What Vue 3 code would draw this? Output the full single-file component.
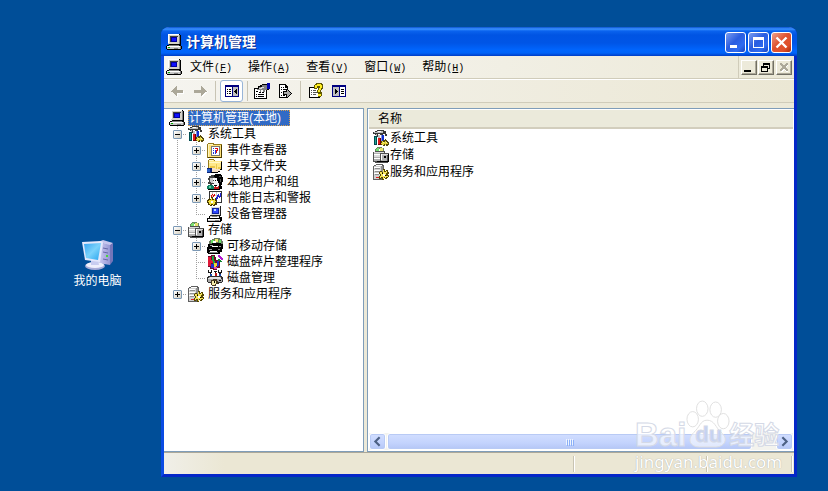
<script setup>
import { ref } from 'vue'

const menus = [
  { text: '文件', key: 'F' },
  { text: '操作', key: 'A' },
  { text: '查看', key: 'V' },
  { text: '窗口', key: 'W' },
  { text: '帮助', key: 'H' },
]

// guides: v = line passing through, t = branch, l = last branch
const tree = [
  { label: '计算机管理(本地)', icon: 'computer', guides: [] },
  { label: '系统工具', icon: 'tools', guides: ['t'], box: '-' },
  { label: '事件查看器', icon: 'events', guides: ['v', 't'], box: '+' },
  { label: '共享文件夹', icon: 'shared', guides: ['v', 't'], box: '+' },
  { label: '本地用户和组', icon: 'users', guides: ['v', 't'], box: '+' },
  { label: '性能日志和警报', icon: 'perf', guides: ['v', 't'], box: '+' },
  { label: '设备管理器', icon: 'device', guides: ['v', 'l'] },
  { label: '存储', icon: 'storage', guides: ['t'], box: '-' },
  { label: '可移动存储', icon: 'removable', guides: ['v', 't'], box: '+' },
  { label: '磁盘碎片整理程序', icon: 'defrag', guides: ['v', 't'] },
  { label: '磁盘管理', icon: 'disk', guides: ['v', 'l'] },
  { label: '服务和应用程序', icon: 'services', guides: ['l'], box: '+' },
]

const items = [
  { label: '系统工具', icon: 'tools' },
  { label: '存储', icon: 'storage' },
  { label: '服务和应用程序', icon: 'services' },
]

const selected = ref(0)
</script>

<template>
  <main class="desktop">
    <svg class="defs" aria-hidden="true">
      <symbol id="computer" viewBox="0 0 16 16">
        <path fill="#000" d="M2 0h12v1h1v10H3v-1H2zM1 11h14v1h1v3h-1v1H1v-1H0v-3h1z" />
        <path fill="#d6d2c8" d="M2 0h11v10H2z" />
        <path fill="#808080" d="M13 1h1v9h-1z" />
        <path fill="#fff" d="M2 0h11v1H3v8H2z" />
        <path fill="#404040" d="M4 2h8v1H5v5H4z" />
        <path fill="#0000a0" d="M5 3h6v5H5z" />
        <path fill="#1010ff" d="M6 4h4v3H6z" />
        <path fill="#c8c8c8" d="M1 12h13v3H1z" />
        <path fill="#fff" d="M1 12h13v1H1z" />
        <path fill="#808080" d="M14 12h1v3h-1zM8 14h4v1H8zM3 11h10v1H3z" />
        <path fill="#00b000" d="M2 13h2v1H2z" />
      </symbol>
      <symbol id="tools" viewBox="0 0 16 16">
        <path fill="#383838" d="M0 2h2V1h2V0h7v1h2v3h1v2h-2V4h-2v1H7V4H5v3H3V5H2V4H0z" />
        <path fill="#c0c0c0" d="M1 2h3v1H1zM4 1h6v2H4zM5 5h2v3H5zM3 4h1v3H3z" />
        <path fill="#fff" d="M5 1h3v1H5z" />
        <path fill="#004a50" d="M1 6h3v9H1z" />
        <path fill="#20a890" d="M2 7h1v7H2z" />
        <path fill="#e01818" d="M5 8h2v6H5z" />
        <path fill="#700000" d="M7 8h1v7H5v-1h2z" />
        <path fill="#1030d0" d="M9 5h2v6H9z" />
        <path fill="#8090e0" d="M8 5h1v6H8z" />
        <path fill="#54480a" d="M8 11h2v-1h2V9h1v1h1v1h1v1h1v3h-1v1h-2v-1h-1v1h-2v-1H8z" />
        <path fill="#e6d63c" d="M9 11h1v1h2v-1h1v2h2v1h-2v1h-1v-1h-1v1H9v-1H8v-1h1z" />
        <path fill="#fff7a0" d="M10 12h1v1h-1zM13 12h1v1h-1z" />
      </symbol>
      <symbol id="events" viewBox="0 0 16 16">
        <path fill="#967b1c" d="M0 2h1V1h6v1h8v14H0z" />
        <path fill="#ffe27a" d="M1 2h5v1h8v12H1z" />
        <path fill="#fff6c0" d="M1 2h5v1H2v12H1z" />
        <path fill="#4c3c00" d="M14 3h1v13H1v-1h13z" />
        <path fill="#777" d="M4 4h9v10H4z" />
        <path fill="#fff" d="M5 5h7v8H5z" />
        <path fill="#2038d8" d="M6 6h1v1H6zM6 8h1v1H6zM6 10h1v2H6zM8 8h1v4H8z" />
        <path fill="#e01010" d="M8 6h3v3h-1v2H9V8h1V7H8z" />
      </symbol>
      <symbol id="shared" viewBox="0 0 16 16">
        <path fill="#967b1c" d="M1 2h1V1h5v1h1v1h7v9H1z" />
        <path fill="#ffe98a" d="M2 2h5v1h7v8H2z" />
        <path fill="#fff9c8" d="M2 2h4v1H2zM2 4h12v1H2z" />
        <path fill="#ecc84c" d="M9 6h1v5H9zM11 9h3v2h-3zM3 8h5v2H3z" />
        <path fill="#000" d="M14 4h1v8H7v-1h7z" />
        <path fill="#0a2378" d="M0 10h5v5H0z" />
        <path fill="#2a62c8" d="M0 11h3v3H0z" />
        <path fill="#f5e0c8" d="M5 10h3v1h5v2h-2v1H5z" />
        <path fill="#000" d="M4 14h7v1H4zM11 13h2v1h-2z" />
      </symbol>
      <symbol id="users" viewBox="0 0 16 16">
        <path fill="#404040" d="M2 2h2V1h4v3H6v2h1v4H5v2H3v-2H1V8h1V6H1V4h1z" />
        <path fill="#c8c8c8" d="M3 4h3v5H4V8H3z" />
        <path fill="#000" d="M7 1h1V0h6v1h1v2h1v5h-1v3h-1v1h-2V9h-1V7h-1V4H8V3H7z" />
        <path fill="#f4f4f4" d="M7 4h3v3h1v2h1v3h-2v-1H7V9H6V7h1z" />
        <path fill="#000" d="M8 6h1v1H8zM7 11h3v1H7z" />
        <path fill="#555" d="M12 2h2v1h-2zM13 5h1v3h-1z" />
        <path fill="#108060" d="M1 11h5v1h1v3H0v-3h1z" />
        <path fill="#5fd0a0" d="M2 12h2v2H2z" />
        <path fill="#c01818" d="M8 12h4v3H7v-2h1z" />
        <path fill="#fff" d="M9 12h2v1H9z" />
        <path fill="#000" d="M12 12h3v3h-3zM1 15h12v1H1z" />
      </symbol>
      <symbol id="perf" viewBox="0 0 16 16">
        <path fill="#333" d="M2 1h13v12H2z" />
        <path fill="#fff" d="M3 2h11v10H3z" />
        <path fill="#ccc" d="M5 2h1v9H5zM9 2h1v9H9zM3 5h11v1H3z" />
        <path fill="#e00000" d="M4 5h1v2H4zM5 4h1v1H5zM6 5h1v2H6zM7 4h1v2H7z" />
        <path fill="#2020d0" d="M9 7h1V5h1V4h1v2h1V3h1v4h-1v1h-1V7h-1v2h-1v1H9z" />
        <path fill="#4b3b00" d="M0 10h1V9h1V8h1v1h1V7h2v2h2V8h1v2h1v2H9v1h1v2H8v1H6v-1H5v1H3v-1H1v-2H0z" />
        <path fill="#f4e23c" d="M1 11h1v-1h2V8h1v2h2V9h1v2h1v1H8v2H7v1H6v-1H4v1H3v-1H2v-2H1z" />
        <path fill="#fff" d="M4 11h2v2H4z" />
      </symbol>
      <symbol id="device" viewBox="0 0 16 16">
        <path fill="#222" d="M3 0h11v10H3z" />
        <path fill="#d8d8d8" d="M3 0h10v9H3z" />
        <path fill="#fff" d="M3 0h10v1H4v8H3z" />
        <path fill="#0d239e" d="M5 2h7v6H5z" />
        <path fill="#3048ff" d="M6 3h5v4H6z" />
        <path fill="#b9d8ff" d="M7 3h2v2H7z" />
        <path fill="#000" d="M2 10h11v1h2v4h-1v1H0v-4h2z" />
        <path fill="#c8c8c8" d="M3 10h9v2H3zM1 13h12v2H1z" />
        <path fill="#fff" d="M3 11h9v1H3zM1 13h12v1H1z" />
        <path fill="#808080" d="M5 10h5v1H5zM8 14h4v1H8z" />
      </symbol>
      <symbol id="storage" viewBox="0 0 16 16">
        <path fill="#6a8a60" d="M3 1h1V0h5v1h2v5H2V2h1z" />
        <path fill="#78e070" d="M4 1h2v4H3V2h1z" />
        <path fill="#e8e370" d="M7 1h3v4H7z" />
        <path fill="#fff" d="M6 2h1v2H6z" />
        <path fill="#505050" d="M0 5h2V4h10v2h4v9h-1v1H2v-1H0z" />
        <path fill="#dcdcdc" d="M1 5h10v1H1zM1 8h6v2H1zM8 7h7v1H8z" />
        <path fill="#b0b0b0" d="M1 6h6v1H1zM1 10h6v4H1zM8 8h6v6H8z" />
        <path fill="#fff" d="M1 7h6v1H1zM1 11h6v1H1zM8 7h1v6H8z" />
        <path fill="#000" d="M11 9h2v2h-2zM15 7h1v8H4v-1h11z" />
      </symbol>
      <symbol id="removable" viewBox="0 0 16 16">
        <path fill="#6a7a60" d="M3 2h2V1h2V0h6v1h2v2h1v4H2V3h1z" />
        <path fill="#68e068" d="M4 2h3v3H4zM12 2h2v3h-2z" />
        <path fill="#f4ee70" d="M8 1h3v3H8z" />
        <path fill="#fff" d="M6 3h3v2H6z" />
        <path fill="#000" d="M1 6h4V5h9v1h2v5h-1v3h-2v2H1v-1H0V9h1z" />
        <path fill="#a0a0a0" d="M3 7h3v1H3zM12 8h2v1h-2zM2 11h3v1H2z" />
        <path fill="#fff" d="M5 8h6v1H5zM3 13h7v1H3z" />
        <path fill="#808080" d="M2 14h9v1H2zM11 11h2v1h-2z" />
      </symbol>
      <symbol id="defrag" viewBox="0 0 16 16">
        <path fill="#700828" d="M1 2h3V1h4v2h1v3h4v8h-3v2H6v-1H3v-2H1z" />
        <path fill="#e01838" d="M1 3h3v3h2v3H4v3H1z" />
        <path fill="#18a840" d="M5 2h2v5h1v3H6V7H5z" />
        <path fill="#f0d530" d="M7 9h3v3H9v2H7z" />
        <path fill="#2030d0" d="M4 10h3v4H4zM10 7h2v5h-1v1h-1z" />
        <path fill="#b31ad0" d="M11 1h2v1h1v1h1v1h1v2h-2V5h-1V4h-1V3h-1z" />
        <path fill="#108830" d="M11 5h2v1h1v1h1v1h-2V7h-2z" />
        <path fill="#e050b0" d="M7 13h3v2H7z" />
      </symbol>
      <symbol id="disk" viewBox="0 0 16 16">
        <path fill="#151515" d="M1 0h1v2h2V0h1v3H4v3H3V3H1zM7 1h3v1H9v4H8V2H7zM11 0h1v2h2V0h1v3h-1v3h-2V3h-1z" />
        <path fill="#1848a8" d="M3 4h2v2H3zM12 4h2v2h-2z" />
        <path fill="#c01818" d="M8 3h2v3H8z" />
        <path fill="#303030" d="M0 7h1V6h14v1h1v5h-1v1h-3v1H4v-1H1v-1H0z" />
        <path fill="#a8a8a8" d="M2 7h12v1H2zM1 9h14v3H1z" />
        <path fill="#e4e4e4" d="M3 7h10v1H3zM1 8h13v1H1z" />
        <path fill="#473b20" d="M4 10h2V9h4v2h1v3H9v2H5v-1H4z" />
        <path fill="#f4ecaa" d="M5 11h4v3H8v1H5z" />
        <path fill="#000" d="M12 10h2v1h-2zM7 11h1v2H7z" />
      </symbol>
      <symbol id="services" viewBox="0 0 16 16">
        <path fill="#606060" d="M1 1h2V0h7v1h1v13h-1v1H9v1H0V2h1z" />
        <path fill="#d0d0d0" d="M1 2h7v13H1z" />
        <path fill="#909090" d="M8 2h2v12H8zM2 4h5v1H2zM2 7h5v1H2zM2 10h4v1H2z" />
        <path fill="#fff" d="M3 1h6v1H3zM1 3h6v1H1zM1 6h6v1H1zM1 9h5v1H1z" />
        <path fill="#e02020" d="M3 13h3v1H3z" />
        <path fill="#584800" d="M6 8h1V7h2v1h1V5h2v2h1V6h2v2h1v2h-1v1h1v2h-1v1h-1v1h-2v-1h-1v2h-2v-2H8v1H6v-3h1v-2H6z" />
        <path fill="#f4e45c" d="M7 8h2v1h1V6h1v2h2V7h1v2h-1v3h2v1h-2v1h-1v-1h-1v2h-1v-2H8v1H7v-2h1v-2H7z" />
        <path fill="#fff" d="M10 10h2v2h-2z" />
        <path fill="#000" d="M9 9h1v1H9zM12 11h1v1h-1z" />
      </symbol>
    </svg>

    <a class="shortcut" href="#">
      <svg viewBox="0 0 34 32" aria-hidden="true">
        <defs>
          <linearGradient id="screen" x1="0" y1="0" x2="1" y2="1">
            <stop offset="0" stop-color="#37a5f2" />
            <stop offset=".5" stop-color="#7ad2fb" />
            <stop offset="1" stop-color="#26a4ee" />
          </linearGradient>
          <linearGradient id="case" x1="0" x2="1">
            <stop offset="0" stop-color="#d6d4f6" />
            <stop offset="1" stop-color="#9597d4" />
          </linearGradient>
        </defs>
        <path fill="#c5c5ed" d="M17 3l5-2 10 3-3 3z" />
        <path fill="url(#case)" d="M16 3l13 3v20l-12-2z" />
        <path fill="#7375b9" d="M29 6l3-2v18l-3 4z" />
        <path stroke="#6668a8" fill="none" d="M22 9l5 1M22 13l5 1M22 20l5 1" />
        <path fill="#49d53a" d="M25 16h2v2h-2z" />
        <ellipse cx="14" cy="27" rx="10" ry="4" fill="#a7acd8" />
        <ellipse cx="14" cy="26" rx="9" ry="3" fill="#eff0fc" />
        <path fill="#c8cdf0" d="M10 20l7 1 1 5h-8z" />
        <path fill="#e4e8fc" d="M1 3l19-1q2 0 2 2l-3 19L4 21z" />
        <path fill="url(#screen)" d="M3 5l17-1-3 17-12-2z" />
      </svg>
      <span>我的电脑</span>
    </a>

    <section class="window" aria-label="计算机管理">
      <header class="titlebar">
        <svg class="ico"><use href="#computer" /></svg>
        <h1>计算机管理</h1>
        <div class="captions">
          <button class="cap" aria-label="最小化">
            <svg viewBox="0 0 19 19"><path fill="#fff" d="M4 12h7v3H4z" /></svg>
          </button>
          <button class="cap" aria-label="最大化">
            <svg viewBox="0 0 19 19"><path fill="#fff" fill-rule="evenodd" d="M4 4h11v11H4zM5 7v7h9V7z" /></svg>
          </button>
          <button class="cap close" aria-label="关闭">
            <svg viewBox="0 0 19 19"><path stroke="#fff" stroke-width="2.4" d="M4.500 4.500l10 10M14.500 4.500l-10 10" /></svg>
          </button>
        </div>
      </header>

      <nav class="menubar">
        <svg class="ico"><use href="#computer" /></svg>
        <div class="menus">
          <button v-for="m in menus" :key="m.key">{{ m.text }}<span class="key">(<u>{{ m.key }}</u>)</span></button>
        </div>
        <div class="mdi">
          <button aria-label="最小化子窗口">
            <svg viewBox="0 0 14 13"><path d="M2 9h7v2H2z" /></svg>
          </button>
          <button aria-label="还原子窗口">
            <svg viewBox="0 0 14 13"><path fill-rule="evenodd" d="M4 2h7v6H9V7h1V4H5v1H4zM2 5h7v6H2zM3 7v3h5V7z" /></svg>
          </button>
          <button class="off" aria-label="关闭子窗口" disabled>
            <svg viewBox="0 0 14 13">
              <path fill="#fff" d="M4 4h2v1h1v1h1V5h1V4h2v1h-1v1H9v2h1v1h1v2H9v-1H8V9H7v1H6v1H4V9h1V8h1V6H5V5H4z" />
              <path fill="#aca899" d="M3 2h2v1h1v1h2V3h1V2h2v2h-1v1H9v2h1v1h1v2H9V9H8V8H6v1H5v1H3V8h1V7h1V5H4V4H3z" />
            </svg>
          </button>
        </div>
      </nav>

      <div class="toolbar" role="toolbar">
        <button aria-label="后退" disabled>
          <svg viewBox="0 0 16 16">
            <path fill="#fff" d="M3 9h1v1h1v1h1v1h1v1h1v1h1v-3h6V8h-1v2H8z" />
            <path fill="#aca899" d="M2 8h1V7h1V6h1V5h1V4h1V3h1v4h6v3H8v3H7v-1H6v-1H5v-1H4V9H2z" />
          </svg>
        </button>
        <button aria-label="前进" disabled>
          <svg viewBox="0 0 16 16">
            <path fill="#fff" d="M3 10h7v4h1v-1h1v-1h1v-1h1v-1h1V9h1V8H3z" />
            <path fill="#aca899" d="M15 8h-1V7h-1V6h-1V5h-1V4h-1V3H9v4H2v3h7v3h1v-1h1v-1h1v-1h1V9h2z" />
          </svg>
        </button>
        <i class="sep"></i>
        <button class="on" aria-label="显示/隐藏控制台树">
          <svg viewBox="0 0 16 16">
            <path fill="#000080" d="M1 2h14v12H1z" />
            <path fill="#fff" d="M2 4h6v9H2z" />
            <path fill="#c0c0c0" d="M9 4h5v9H9z" />
            <path d="M3 6h1v1H3zM5 6h2v1H5zM3 8h1v1H3zM5 8h2v1H5zM3 10h1v1H3zM5 10h2v1H5zM12 6h1v5h-1v-1h-1V9h-1V8h1V7h1z" />
          </svg>
        </button>
        <i class="sep"></i>
        <button aria-label="属性">
          <svg viewBox="0 0 16 16">
            <path d="M0 5h4V3h2V2h2V1h5v2h2v4h-2v9H0z" />
            <path fill="#fff" d="M1 6h11v9H1z" />
            <path fill="#808080" d="M3 6h2V4h3V2h5v5h-2v2H9V7H7v2H6V7H3z" />
            <path fill="#ddd" d="M5 5h2V4h3v1H8v1H5z" />
            <path d="M2 8h2v1H2zM5 9h2v1H5zM8 9h2v1H8zM2 11h1v1H2zM4 11h6v1H4zM2 13h1v1H2zM4 13h6v1H4z" />
            <path fill="#0000b0" d="M13 0h3v6h-3z" />
          </svg>
        </button>
        <button aria-label="导出列表">
          <svg viewBox="0 0 16 16">
            <path d="M2 1h7v1h1v1h1v3h-1V5H8V2H3v12h7v-1h1v2H2z" />
            <path fill="#fff" d="M3 2h5v3h2v9H3z" />
            <path d="M4 4h1v1H4zM6 4h1v1H6zM4 6h1v1H4zM6 6h3v1H6zM4 9h1v1H4zM4 12h1v1H4zM6 12h2v1H6zM9 6h2v1h1v1h1v1h1v1h1v1h-1v1h-1v1h-1v1h-1v1H9v-3H6V8h3z" />
            <path fill="#aaa" d="M7 9h3V7h1v1h1v1h1v1h1v1h-1v1h-1v1h-1v1h-1v-3H7z" />
          </svg>
        </button>
        <i class="sep wide"></i>
        <button aria-label="帮助主题">
          <svg viewBox="0 0 16 16">
            <path d="M1 4h7v1h4v10H1z" />
            <path fill="#fff" d="M2 5h9v9H2z" />
            <path fill="#555" d="M3 7h1v1H3zM5 7h3v1H5zM3 9h1v1H3zM5 9h4v1H5zM3 11h1v1H3zM5 11h3v1H5z" />
            <path fill="#605800" d="M6 2h1V1h1V0h6v1h1v5h-1v1h-1v2h1v4h-1v1h-3v-4H9V7h1V5H9v1H6z" />
            <path fill="#ffed20" d="M7 2h2V1h4v1h1v3h-1v2h-1v2h-2V7h1V5h1V3H9v2H7zM10 11h3v2h-3z" />
          </svg>
        </button>
        <button aria-label="显示/隐藏操作窗格">
          <svg viewBox="0 0 16 16">
            <path fill="#000080" d="M1 2h14v12H1z" />
            <path fill="#c0c0c0" d="M2 4h6v9H2z" />
            <path fill="#fff" d="M9 4h5v9H9z" />
            <path d="M10 6h3v1h-3zM10 8h3v1h-3zM10 10h3v1h-3zM4 6h1v1h1v1h1v1H6v1H5v1H4z" />
          </svg>
        </button>
      </div>

      <div class="body">
        <div class="pane tree" role="tree">
          <div
            v-for="(n, i) in tree"
            :key="n.label"
            class="row"
            role="treeitem"
            :aria-selected="selected === i"
            @click="selected = i"
          >
            <span v-for="(g, d) in n.guides" :key="d" class="guide" :class="g">
              <button v-if="n.box && d === n.guides.length - 1" class="box" :class="{ plus: n.box === '+' }" aria-label="展开或折叠"></button>
            </span>
            <svg class="ico"><use :href="'#' + n.icon" /></svg>
            <span class="label" :class="{ sel: selected === i }">{{ n.label }}</span>
          </div>
        </div>

        <div class="pane list">
          <table>
            <thead>
              <tr><th>名称</th></tr>
            </thead>
            <tbody>
              <tr v-for="it in items" :key="it.label">
                <td>
                  <div class="cell">
                    <svg class="ico"><use :href="'#' + it.icon" /></svg>
                    <span>{{ it.label }}</span>
                  </div>
                </td>
              </tr>
            </tbody>
          </table>
          <div class="scroll">
            <button aria-label="向左滚动">
              <svg viewBox="0 0 14 14"><path d="M9 3L5 7l4 4" /></svg>
            </button>
            <div class="track">
              <div class="thumb"><i></i><i></i><i></i><i></i></div>
            </div>
            <button aria-label="向右滚动">
              <svg viewBox="0 0 14 14"><path d="M5 3l4 4-4 4" /></svg>
            </button>
          </div>
        </div>
      </div>

      <footer class="status">
        <span class="main"></span>
        <span class="mid"></span>
        <span class="end"></span>
      </footer>

      <div class="mark">
        <svg class="paw" viewBox="0 0 46 50" aria-hidden="true">
          <ellipse cx="7" cy="20" rx="6" ry="8" />
          <ellipse cx="17" cy="9" rx="6" ry="8" />
          <ellipse cx="31" cy="10" rx="6" ry="8" />
          <ellipse cx="39" cy="22" rx="6" ry="8" />
          <path d="M22 21c8 0 9 8 15 13 8 7 3 15-6 15H14C4 49 1 41 8 34c6-5 7-13 14-13z" />
        </svg>
        <div class="brand"><b>Bai</b><b class="du">du</b><b class="cn">经验</b></div>
        <div class="url">jingyan.baidu.com</div>
      </div>
    </section>
  </main>
</template>

<style>
body {
  margin: 0;
  background: #004e98;
}
</style>

<style scoped>
.desktop {
  box-sizing: border-box;
  min-height: 100vh;
  display: grid;
  grid-template-columns: 130px minmax(0, 1fr);
  column-gap: 31px;
  padding: 27px 31px 14px 0;
  background: #004e98;
  font-family: "Liberation Sans", "Noto Sans CJK SC", sans-serif;
  font-size: 12px;
  line-height: 16px;
  color: #000;
}
.defs {
  position: absolute;
  width: 0;
  height: 0;
}
button {
  padding: 0;
  border: 0;
  background: none;
  font: inherit;
  color: inherit;
}
button svg {
  display: block;
  width: 100%;
  height: 100%;
  shape-rendering: crispEdges;
}
.ico {
  flex: none;
  width: 16px;
  height: 16px;
  shape-rendering: crispEdges;
}
.shortcut {
  display: flex;
  flex-direction: column;
  align-items: center;
  gap: 2px;
  align-self: start;
  margin: 212px 0 0 65px;
  color: #fff;
  text-decoration: none;
  white-space: nowrap;
}
.shortcut svg {
  width: 34px;
  height: 32px;
}

.window {
  position: relative;
  display: flex;
  flex-direction: column;
  min-width: 0;
  border: solid;
  border-width: 0 3px 3px;
  border-color: #0a3be0 #0427c8 #0427c8 #0a4be4;
  border-radius: 8px 8px 0 0;
  background: #ece9d8;
}
.titlebar {
  display: flex;
  align-items: center;
  height: 29px;
  margin: 0 -3px;
  padding: 0 5px;
  border-radius: 8px 8px 0 0;
  background: linear-gradient(#0a52d0 0, #3b93ff 2px, #0a63ee 4px, #0054e3 8px, #0055e6 16px, #0065fd 23px, #0063f8 26px, #003cc4 29px);
}
.titlebar h1 {
  flex: 1;
  margin: 0 0 0 4px;
  font-size: 14px;
  line-height: 18px;
  color: #fff;
  text-shadow: 1px 1px #0a2a8c;
}
.captions {
  display: flex;
  gap: 2px;
  padding-top: 2px;
}
.cap {
  box-sizing: border-box;
  width: 21px;
  height: 21px;
  border: 1px solid #fff;
  border-radius: 3px;
  background: linear-gradient(135deg, #7a9cf0, #2a5de0 45%, #2f6cf0 75%, #1743c0);
}
.cap.close {
  background: linear-gradient(135deg, #f0a08a, #de5230 45%, #e0502a 75%, #a82c0c);
}
.cap.close svg {
  shape-rendering: auto;
}

.menubar {
  display: flex;
  align-items: center;
  height: 22px;
  padding-left: 2px;
  border-bottom: 1px solid #d0ccba;
  background: linear-gradient(90deg, #f7f6f2, #ece9d8);
}
.menus {
  flex: 1;
  display: flex;
  gap: 16px;
  padding: 1px 0 0 8px;
}
.menus button {
  white-space: nowrap;
}
.key {
  font-family: "Liberation Mono", monospace;
  font-size: 10px;
}
.mdi {
  display: flex;
  align-self: stretch;
  align-items: center;
  gap: 1px;
  padding: 0 2px;
  border-left: 1px solid #d0ccba;
}
.mdi button {
  box-sizing: border-box;
  width: 16px;
  height: 15px;
  border: 1px solid;
  border-color: #fff #716f64 #716f64 #fff;
  box-shadow: inset -1px -1px #aca899;
}
.mdi .off {
  margin-left: 1px;
}

.toolbar {
  display: flex;
  align-items: center;
  height: 22px;
  margin-bottom: 5px;
  padding: 0 1px;
  border-top: 1px solid #fff;
  border-bottom: 1px solid #d0ccba;
  background: linear-gradient(90deg, #f5f4ef, #ebe7d4);
}
.toolbar button {
  box-sizing: border-box;
  width: 23px;
  height: 22px;
  padding: 3px;
}
.toolbar button.on {
  margin: 0 2px 0 4px;
  border: 1px solid #98b5d8;
  border-radius: 3px;
  padding: 2px;
  background: #fff;
}
.sep {
  width: 1px;
  height: 20px;
  background: #c8c4b4;
  margin: 0 2px;
}
.sep.wide {
  margin: 0 3px 0 4px;
}
.toolbar .sep:first-of-type {
  margin: 0 0 0 4px;
}

.body {
  flex: 1;
  display: grid;
  grid-template-columns: minmax(0, 200fr) minmax(0, 427fr);
  gap: 3px;
}
.pane {
  border: 1px solid #7f9db9;
  background: #fff;
}
.tree {
  padding: 1px 0 0 4px;
  border-left-width: 0;
}
.row {
  display: flex;
  height: 16px;
  white-space: nowrap;
}
.row .ico {
  margin: 0 3px 0 1px;
}
.label {
  padding: 0 1px;
}
.label.sel {
  padding-right: 9px;
  background: #316ac5;
  color: #fff;
  outline: 1px dotted #d8a050;
  outline-offset: -1px;
}
.guide {
  flex: none;
  display: flex;
  align-items: center;
  justify-content: center;
  width: 19px;
  height: 16px;
  --dot-v: repeating-linear-gradient(#a0a0a0 0 1px, transparent 1px 2px);
  --dot-h: repeating-linear-gradient(90deg, #a0a0a0 0 1px, transparent 1px 2px);
  background-repeat: no-repeat;
}
.guide.v {
  background-image: var(--dot-v);
  background-size: 1px 16px;
  background-position: 9px 0;
}
.guide.t {
  background-image: var(--dot-v), var(--dot-h);
  background-size: 1px 16px, 10px 1px;
  background-position: 9px 0, 9px 8px;
}
.guide.l {
  background-image: var(--dot-v), var(--dot-h);
  background-size: 1px 8px, 10px 1px;
  background-position: 9px 0, 9px 8px;
}
.box {
  box-sizing: border-box;
  width: 9px;
  height: 9px;
  margin-top: 1px;
  border: 1px solid #7b98b5;
  border-radius: 1px;
  background: linear-gradient(#000, #000) center / 5px 1px no-repeat, linear-gradient(135deg, #fff, #d4cfc0);
}
.box.plus {
  background: linear-gradient(#000, #000) center / 5px 1px no-repeat, linear-gradient(#000, #000) center / 1px 5px no-repeat, linear-gradient(135deg, #fff, #d4cfc0);
}

.list {
  display: flex;
  flex-direction: column;
  justify-content: space-between;
  padding: 1px;
  border-right-width: 0;
}
table {
  width: 100%;
  border-collapse: collapse;
}
th {
  height: 16px;
  padding: 1px 9px 0;
  border-bottom: 2px solid #d2cebd;
  background: #ebeadb;
  font-weight: 400;
  text-align: left;
}
td {
  padding: 0;
}
.cell {
  display: flex;
  align-items: center;
  gap: 1px;
  height: 17px;
  padding-left: 4px;
}
.scroll {
  display: flex;
  gap: 1px;
  height: 17px;
  background: #f3f3ee;
}
.scroll button,
.thumb {
  box-sizing: border-box;
  border: 1px solid #fff;
  border-radius: 3px;
  background: linear-gradient(#d2deff, #c3d3fd 60%, #b4c6f5);
  box-shadow: inset 0 0 0 1px #b8caf5;
}
.scroll button {
  width: 17px;
}
.scroll path {
  fill: none;
  stroke: #4d6185;
  stroke-width: 2;
}
.scroll svg {
  shape-rendering: auto;
}
.track {
  flex: 1;
  display: flex;
}
.thumb {
  display: flex;
  align-items: center;
  justify-content: center;
  gap: 1px;
  width: 94%;
}
.thumb i {
  width: 1px;
  height: 6px;
  background: #eef4fe;
  box-shadow: 1px 1px #8cb0f8;
}

.status {
  display: flex;
  height: 16px;
  padding: 3px 2px 2px 0;
  border-top: 1px solid #aca899;
  background: linear-gradient(90deg, #f0efe8, #ebe7d4 60px);
}
.status span {
  border-right: 1px solid #c8c4b2;
  box-shadow: 1px 0 #fff;
}
.main {
  flex: 408;
}
.mid {
  flex: 132;
}
.end {
  flex: 84;
}

.mark {
  position: absolute;
  right: 9px;
  bottom: 1px;
  width: 150px;
  color: rgba(255, 255, 255, 0.65);
  pointer-events: none;
}
.paw {
  position: absolute;
  left: 51px;
  top: -19px;
  width: 44px;
  height: 48px;
  fill: rgba(255, 255, 255, 0.55);
  stroke: #dedede;
}
.brand {
  position: relative;
  display: flex;
  align-items: center;
  height: 32px;
  font-size: 33px;
  -webkit-text-stroke: 1px #d4d9e6;
}
.brand .du {
  padding-left: 9px;
  font-size: 22px;
  color: #c5d2f5;
}
.brand .cn {
  padding-left: 7px;
  font-size: 25px;
}
.url {
  font-family: "Noto Sans", sans-serif;
  font-size: 17px;
  line-height: 22px;
  color: #fff;
  text-shadow: 0 0 1px #999;
}
</style>
